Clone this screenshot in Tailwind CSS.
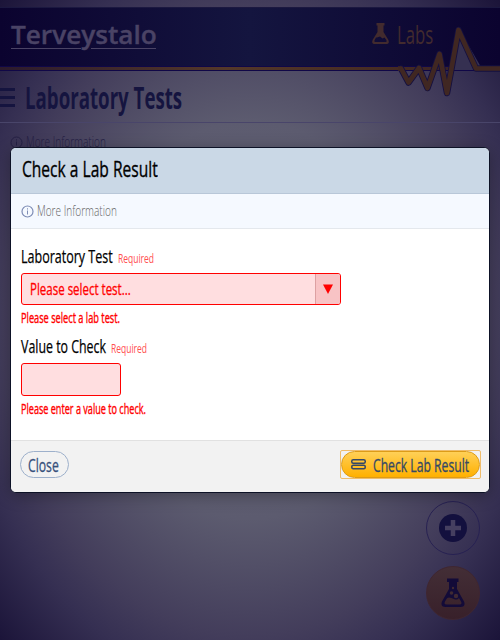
<!DOCTYPE html>
<html lang="en">
<head>
<meta charset="utf-8">
<title>Laboratory Tests</title>
<script src="https://cdn.jsdelivr.net/npm/@tailwindcss/browser@4"></script>
</head>
<body class="font-['Open_Sans',sans-serif]">
<div class="relative w-[500px] h-[640px] overflow-hidden bg-[radial-gradient(ellipse_farthest-corner_at_center,#686879_0%,#5c5b6f_44%,#433d5b_70%,#352f52_81%,#1b1439_100%)]">

  <!-- Page header -->
  <header class="mt-[7px] h-[59px] flex items-start justify-between border-t border-[#1b1840] bg-[linear-gradient(90deg,#0b032f,#14153f_50%,#0b032f)] pl-[11px] pr-[67px]">
    <div class="pt-[11px] text-[#4a4365]">
      <div data-fit class="w-[146px] h-[30px] leading-[30px] text-[26px] font-semibold whitespace-nowrap [-webkit-text-stroke:0.4px]"><span class="inline-block origin-left">Terveystalo</span></div>
      <div class="flex gap-[10px] -mt-[1px] w-[145px] h-px"><i class="w-[70px] bg-[#4a4365]"></i><i class="flex-1 bg-[#4a4365]"></i></div>
    </div>
    <div class="flex pt-[14px] gap-[8px] text-[#422b2e]">
      <svg class="w-[17px] h-[22px] mt-[1px]" viewBox="0 0 17 22" fill="currentColor" fill-rule="evenodd"><path d="M4.500 0h8v2.500h-1V9l4.800 7.800Q18 21 14 21H3Q-1 21 .7 16.800L5.500 9V2.500h-1zM2.700 17q-1 2 .8 2h10q1.800 0 .8-2l-1.800-2.500-2 1L8 13.500 5 14.500H4z"/></svg>
      <div data-fit class="w-[36px] h-[24px] leading-[24px] text-[25px] whitespace-nowrap"><span class="inline-block origin-left">Labs</span></div>
    </div>
  </header>
  <div class="h-[5px] border-y border-[#100747] bg-[linear-gradient(90deg,#2b1a2d,#543829_45%,#442a22_80%,#2b1a2d)]"></div>
  <svg class="absolute left-[390px] top-[20px] w-[110px] h-[84px]" viewBox="0 0 110 84">
    <path d="M60 50L69 9l22 38v3z" fill="#353051"/>
    <path d="M10 48.500h1l7.500 14L29 48l8.500 20L49.500 34 57 73 68.500 10 86 48.500h24" fill="none" stroke="#151040" stroke-width="6.500" stroke-linejoin="round"/>
    <path d="M8 48.500h3l7.500 14L29 48l8.500 20L49.500 34 57 73 68.500 10 86 48.500h24" fill="none" stroke="#402722" stroke-width="4.700" stroke-linejoin="round"/>
  </svg>

  <!-- Page title -->
  <div class="h-[52px] flex border-b border-[#49456a] text-[#15143f]">
    <div class="w-[25px] pt-[17px] flex flex-col gap-[5px]">
      <i class="w-[15px] h-[3px] bg-current"></i><i class="w-[15px] h-[3px] bg-current"></i><i class="w-[15px] h-[3px] bg-current"></i>
    </div>
    <h1 data-fit class="w-[157px] h-[50px] leading-[50px] mt-[2px] text-[29.5px] font-bold whitespace-nowrap"><span class="inline-block origin-left">Laboratory Tests</span></h1>
  </div>
  <div class="flex pl-[10px] pt-[9px] gap-[3px] text-[#252044]">
    <svg class="w-[13px] h-[13px] mt-[4px]" viewBox="0 0 13 13" fill="none" stroke="currentColor"><circle cx="6.500" cy="6.500" r="5.500"/><path d="M6.500 5.500v4M6.500 3.300v1.200"/></svg>
    <div data-fit class="w-[80px] h-[20px] leading-[20px] text-[14.5px] font-light whitespace-nowrap"><span class="inline-block origin-left">More Information</span></div>
  </div>

  <!-- Floating actions -->
  <div class="absolute left-[426px] top-[501px] flex flex-col gap-[11px]">
    <div class="size-[54px] rounded-full border border-[#272152] flex items-center justify-center">
      <svg class="size-[28px]" viewBox="0 0 28 28"><circle cx="14" cy="14" r="14" fill="#13103e"/><path d="M14 6v16M6 14h16" stroke="#453f60" stroke-width="4.500" stroke-linejoin="round"/></svg>
    </div>
    <div class="size-[54px] rounded-full border border-[#3f2630] bg-[linear-gradient(#432e36,#38202a)] flex items-center justify-center">
      <svg class="w-[24px] h-[30px]" viewBox="0 0 24 30" fill="#130b38" fill-rule="evenodd"><path d="M6 .5h11.500v3.500h-1.500v7l7 12.500q2 5.500-3.500 5.500h-15Q-1 29 1 23.500L8 11V4H6zM4 23.500q-1.500 3 1.500 3h13q3 0 1.500-3L18 20q-2 2.500-5 1t-5-1.500T5.500 21z"/><g fill="#402a33"><circle cx="12" cy="10" r="1.200"/><circle cx="10.500" cy="15" r="1.800"/><circle cx="15" cy="18" r="2.200"/></g></svg>
    </div>
  </div>

  <!-- Modal dialog -->
  <section class="absolute left-[10px] top-[147px] w-[480px] h-[346px] rounded-[6px] border border-[#0d1226] bg-white overflow-hidden shadow-[0_3px_16px_rgba(0,0,0,0.3)] flex flex-col text-black">
    <div class="h-[46px] shrink-0 bg-[#cad8e6] border-b border-[#b8c7d8] pl-[11px]">
      <h2 data-fit class="w-[136px] h-[41px] leading-[41px] text-[22px] whitespace-nowrap [-webkit-text-stroke:0.35px]"><span class="inline-block origin-left">Check a Lab Result</span></h2>
    </div>
    <div class="h-[35px] shrink-0 bg-[#f5f9ff] border-b border-[#e4e8ed] flex items-center pl-[10px] gap-[3px]">
      <svg class="w-[13px] h-[13px] text-[#7d8cb5] mt-px" viewBox="0 0 13 13" fill="none" stroke="currentColor"><circle cx="6.500" cy="6.500" r="5.500" stroke-width="1.200"/><path d="M6.500 5.500v4M6.500 3.300v1.200"/></svg>
      <div data-fit class="w-[80px] h-[20px] leading-[20px] text-[14.5px] font-light text-[#666] whitespace-nowrap"><span class="inline-block origin-left">More Information</span></div>
    </div>
    <div class="flex-1 pl-[10px] pt-[15px] text-[#ff0000]">
      <div class="flex gap-[5px] h-[29px]">
        <label data-fit class="w-[92px] h-[24px] leading-[24px] text-[18.5px] text-black whitespace-nowrap [-webkit-text-stroke:0.25px]"><span class="inline-block origin-left">Laboratory Test</span></label>
        <div data-fit class="w-[36px] h-[24px] leading-[24px] mt-[2px] text-[13px] text-[#ff5050] whitespace-nowrap"><span class="inline-block origin-left">Required</span></div>
      </div>
      <div class="w-[320px] h-[32px] rounded-[3px] border border-[#ff0000] bg-[#ffdee0] flex overflow-hidden">
        <div class="flex-1 pl-[8px]"><div data-fit class="w-[101px] h-[30px] leading-[30px] text-[15.5px] whitespace-nowrap [-webkit-text-stroke:0.3px]"><span class="inline-block origin-left">Please select test...</span></div></div>
        <div class="w-[25px] bg-[#f8c3c5] border-l border-[#dda0a2] flex items-center justify-center"><svg class="w-[10px] h-[10px] -mt-px" viewBox="0 0 10 10"><path d="M0 .5h10L5 10z" fill="#ff0000"/></svg></div>
      </div>
      <p data-fit class="w-[99px] h-[20px] leading-[20px] mt-[2px] text-[15px] whitespace-nowrap [-webkit-text-stroke:0.4px]"><span class="inline-block origin-left">Please select a lab test.</span></p>
      <div class="flex gap-[5px] h-[29px] mt-[7px]">
        <label data-fit class="w-[85px] h-[24px] leading-[24px] text-[18.5px] text-black whitespace-nowrap [-webkit-text-stroke:0.25px]"><span class="inline-block origin-left">Value to Check</span></label>
        <div data-fit class="w-[36px] h-[24px] leading-[24px] mt-[2px] text-[13px] text-[#ff5050] whitespace-nowrap"><span class="inline-block origin-left">Required</span></div>
      </div>
      <div class="w-[100px] h-[33px] rounded-[3px] border border-[#ff0000] bg-[#ffdee0]"></div>
      <p data-fit class="w-[125px] h-[20px] leading-[20px] mt-[2px] text-[15px] whitespace-nowrap [-webkit-text-stroke:0.4px]"><span class="inline-block origin-left">Please enter a value to check.</span></p>
    </div>
    <div class="h-[52px] shrink-0 bg-[#f2f2f2] border-t border-[#e1e1e1] flex justify-between pl-[9px] pr-[8px] pt-[9px] text-[#36507b]">
      <button class="w-[49px] h-[27px] mt-px rounded-full border border-[#9db0cb] flex pl-[7px] text-left"><span data-fit class="block w-[31px] h-[25px] leading-[25px] text-[18.5px] whitespace-nowrap [-webkit-text-stroke:0.3px]"><span class="inline-block origin-left">Close</span></span></button>
      <div class="w-[141px] h-[29px] rounded-[2px] border-[1.5px] border-[#efbd6b]">
        <button class="w-[139px] h-[27px] rounded-full border border-[#dd9c18] bg-[linear-gradient(#ffd057,#ffb000)] flex items-center pl-[9px] gap-[7px] text-left text-[#344866]">
          <svg class="w-[15px] h-[11px]" viewBox="0 0 15 11" fill="none" stroke="currentColor" stroke-width="1.500"><rect x=".75" y=".75" width="13.500" height="3.500" rx="1.500"/><rect x=".75" y="6.250" width="13.500" height="3.500" rx="1.500"/></svg>
          <span data-fit class="block w-[96px] h-[25px] leading-[25px] text-[18.5px] whitespace-nowrap [-webkit-text-stroke:0.3px]"><span class="inline-block origin-left">Check Lab Result</span></span>
        </button>
      </div>
    </div>
  </section>
</div>
<script>
  // Condense each label to the width of its box.
  function fit() {
    document.querySelectorAll('[data-fit]').forEach(function (box) {
      var text = box.firstElementChild;
      text.style.transform = 'scaleX(' + box.offsetWidth / text.offsetWidth + ')';
    });
  }
  window.addEventListener('load', function () {
    fit();
    document.fonts.ready.then(fit);
    setTimeout(fit, 50);
  });
</script>
</body>
</html>
